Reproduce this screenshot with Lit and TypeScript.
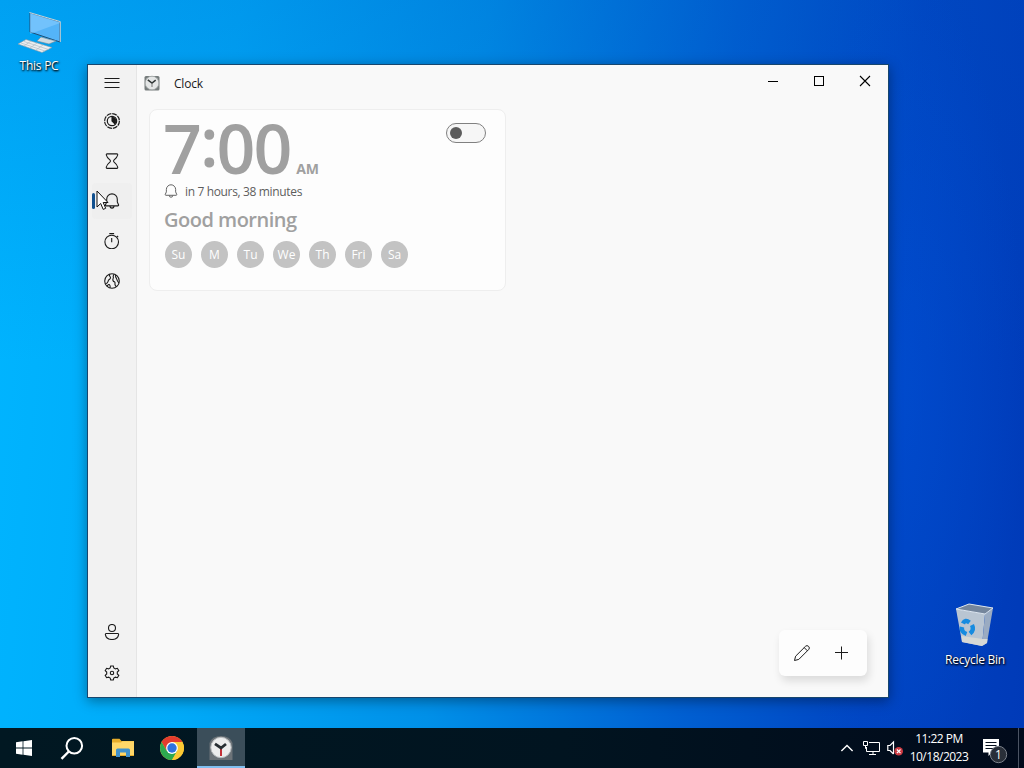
// app-root.ts

import { LitElement, html, css, svg } from 'lit';
import { customElement } from 'lit/decorators.js';

const bell = svg`
  <path d="M1.4 12 L2.7 9 V6.3 A5.3 5.4 0 0 1 13.3 6.3 V9 L14.6 12 Q14.7 12.9 13.8 12.9 H2.2 Q1.3 12.9 1.4 12 Z" />
  <path d="M6 13.1 A2 2 0 0 0 10 13.1" />
`;

// All of the rail icons are drawn in a 16x16 box.
const icons = {
  menu: svg`<path d="M0.5 3.5 H15.5 M0.5 7.5 H15.5 M0.5 12.5 H15.5" />`,
  focus: svg`
    <circle cx="8" cy="8" r="7.4" stroke-width="1.2" stroke-dasharray="4.9 0.91" />
    <circle cx="8" cy="8" r="4.7" stroke-width="1.2" />
    <path d="M8 4.2 A3.8 3.8 0 0 1 10.7 10.7 L8 8 Z" fill="currentColor" />
  `,
  timer: svg`
    <path d="M3 0.9 H13 Q13.8 0.9 13.7 2 Q13.3 4.3 9.9 7.2 Q9.2 8 9.9 8.8 Q13.3 11.7 13.7 14 Q13.8 15.4 13 15.4 H3 Q2.2 15.4 2.3 14 Q2.7 11.7 6.1 8.8 Q6.8 8 6.1 7.2 Q2.7 4.3 2.3 2 Q2.2 0.9 3 0.9 Z" />
  `,
  alarm: bell,
  stopwatch: svg`
    <circle cx="7.7" cy="9" r="6.8" />
    <path d="M5.3 0.6 H10.1 M7.7 5 V9.2 M12.9 3 L14.2 4.2" />
  `,
  world: svg`
    <circle cx="8" cy="8" r="7.3" />
    <path d="M5.8 1.1 Q4.9 2.5 6 3.5 Q7.2 4.9 5.6 6.2 Q4.2 6.9 4 8.6 Q3.4 10.3 1.4 10.8" />
    <path d="M10.2 1.2 Q8.6 3.2 9.4 4.6 Q8.3 6.9 9.4 8.4 Q11.6 8.9 10.9 11.1 Q11.2 13 12.3 13.6" />
    <path d="M3.1 13.2 Q4.2 10.9 5.6 11.8 Q6.6 12.7 5.9 14.9 M11.6 2 Q11.2 4 12.4 5.4 Q13.4 8.4 15 10.2" />
  `,
  account: svg`
    <circle cx="8" cy="4" r="3.5" />
    <path d="M2.2 9.5 H13.8 Q14.7 9.5 14.6 10.6 Q13.8 15.5 8 15.5 Q2.2 15.5 1.4 10.6 Q1.3 9.5 2.2 9.5 Z" />
  `,
  settings: svg`
    <path d="M6.7 1 H9.3 L9.8 3 L11.4 3.9 L13.4 3.3 L14.8 5.7 L13.3 7.1 V8.9 L14.8 10.3 L13.4 12.7 L11.4 12.1 L9.8 13 L9.3 15 H6.7 L6.2 13 L4.6 12.1 L2.6 12.7 L1.2 10.3 L2.7 8.9 V7.1 L1.2 5.7 L2.6 3.3 L4.6 3.9 L6.2 3 Z" />
    <circle cx="8" cy="8" r="1.7" />
  `,
};

const icon = (shape: unknown) => html`
  <svg class="icon" width="16" height="16" viewBox="0 0 16 16">${shape}</svg>
`;

@customElement('clock-nav')
export class ClockNav extends LitElement {
  static override styles = css`
    :host {
      display: flex;
      flex-direction: column;
      box-sizing: border-box;
      width: 49px;
      padding-bottom: 2px;
      background: #f2f2f2;
      border-right: 1px solid #e5e5e5;
      color: #1b1b1b;
    }
    .item {
      display: flex;
      align-items: center;
      justify-content: center;
      height: 36px;
      margin: 0 4px 4px;
      border-radius: 4px;
    }
    .item.menu {
      margin-bottom: 2px;
    }
    .item.account {
      margin-bottom: 5px;
    }
    .item.active {
      position: relative;
      background: #efefef;
    }
    .item.active::before {
      content: '';
      position: absolute;
      left: 0;
      top: 10px;
      width: 3px;
      height: 16px;
      border-radius: 2px;
      background: #10508f;
    }
    .spacer {
      flex: 1;
    }
    .icon {
      fill: none;
      stroke: currentColor;
      stroke-width: 1.1;
    }
  `;

  override render() {
    return html`
      <div class="item menu">${icon(icons.menu)}</div>
      <div class="item">${icon(icons.focus)}</div>
      <div class="item">${icon(icons.timer)}</div>
      <div class="item active">${icon(icons.alarm)}</div>
      <div class="item">${icon(icons.stopwatch)}</div>
      <div class="item">${icon(icons.world)}</div>
      <div class="spacer"></div>
      <div class="item account">${icon(icons.account)}</div>
      <div class="item">${icon(icons.settings)}</div>
    `;
  }
}

@customElement('alarm-card')
export class AlarmCard extends LitElement {
  static override styles = css`
    :host {
      display: flex;
      box-sizing: border-box;
      width: 357px;
      height: 182px;
      padding: 13px 19px 0 14px;
      justify-content: space-between;
      align-items: flex-start;
      background: #fdfdfd;
      border: 1px solid #eeeeee;
      border-radius: 8px;
      color: #a0a0a0;
    }
    .time {
      display: flex;
      align-items: baseline;
      height: 49px;
      line-height: 49px;
      font-weight: 600;
    }
    .digits {
      font-size: 68px;
      letter-spacing: -2px;
      margin-left: -1px;
    }
    .colon {
      vertical-align: 7px;
      line-height: 0;
    }
    .period {
      margin-left: 6px;
      font-size: 14px;
      font-weight: 700;
      letter-spacing: -0.2px;
    }
    .remaining {
      display: flex;
      align-items: center;
      gap: 7px;
      height: 18px;
      margin-top: 11px;
      font-size: 12px;
      line-height: 16px;
      letter-spacing: -0.35px;
      color: #5d5d5d;
    }
    .icon {
      width: 14px;
      height: 14px;
      margin-top: -2px;
      fill: none;
      stroke: currentColor;
      stroke-width: 1.1;
    }
    .name {
      height: 28px;
      margin-top: 5px;
      line-height: 28px;
      font-size: 20px;
      font-weight: 600;
      letter-spacing: -0.5px;
      white-space: nowrap;
    }
    .days {
      display: flex;
      gap: 9px;
      margin: 7px 0 0 1px;
    }
    .day {
      width: 27px;
      height: 27px;
      border-radius: 50%;
      background: #c3c3c3;
      color: #fff;
      font-size: 12px;
      line-height: 28px;
      text-align: center;
    }
    .toggle {
      box-sizing: border-box;
      width: 40px;
      height: 20px;
      padding: 3px;
      border: 1px solid #808080;
      border-radius: 10px;
      background: #f6f6f6;
    }
    .knob {
      width: 12px;
      height: 12px;
      border-radius: 50%;
      background: #5c5c5c;
    }
  `;

  days = ['Su', 'M', 'Tu', 'We', 'Th', 'Fri', 'Sa'];

  override render() {
    return html`
      <div>
        <div class="time">
          <span class="digits">7<span class="colon">:</span>00</span>
          <span class="period">AM</span>
        </div>
        <div class="remaining">${icon(bell)}<span>in 7 hours, 38 minutes</span></div>
        <div class="name">Good morning</div>
        <div class="days">
          ${this.days.map((day) => html`<div class="day">${day}</div>`)}
        </div>
      </div>
      <div class="toggle"><div class="knob"></div></div>
    `;
  }
}

@customElement('clock-window')
export class ClockWindow extends LitElement {
  static override styles = css`
    :host {
      display: flex;
      background: #f9f9f9;
      border: 1px solid #17466e;
      box-shadow: 0 3px 12px rgba(0, 0, 0, 0.38);
    }
    .content {
      flex: 1;
      display: flex;
      flex-direction: column;
    }
    .titlebar {
      display: flex;
      height: 44px;
      align-items: flex-start;
    }
    .logo {
      margin: 10px 0 0 7px;
    }
    .title {
      flex: 1;
      margin: 10px 0 0 14px;
      font-size: 12px;
      line-height: 18px;
      letter-spacing: -0.2px;
      color: #1a1a1a;
    }
    .control {
      display: flex;
      width: 46px;
      height: 32px;
      align-items: center;
      justify-content: center;
    }
    .control svg {
      fill: none;
      stroke: #000;
    }
    alarm-card {
      margin-left: 12px;
    }
    .commands {
      display: flex;
      align-self: flex-end;
      box-sizing: border-box;
      width: 88px;
      height: 46px;
      margin: auto 21px 21px 0;
      padding: 0 3px;
      align-items: center;
      background: #fdfdfd;
      border-radius: 6px;
      box-shadow: 2px 5px 9px rgba(0, 0, 0, 0.12);
    }
    .command {
      display: flex;
      width: 40px;
      justify-content: center;
    }
    .command svg {
      fill: none;
      stroke: #1b1b1b;
    }
  `;

  override render() {
    return html`
      <clock-nav></clock-nav>
      <div class="content">
        <div class="titlebar">
          <svg class="logo" width="16" height="16" viewBox="0 0 16 16">
            <rect x="0.5" y="1" width="15" height="14.5" rx="1.5" fill="#767c7c" />
            <circle cx="8" cy="8" r="6.8" fill="#e4e6e6" stroke="#a4aaaa" stroke-width="0.8" />
            <path d="M3.8 4.8 L8 8 L11.7 5.1" fill="none" stroke="#303636" stroke-width="1.5" />
            <path d="M8 8 V12" stroke="#777" />
          </svg>
          <div class="title">Clock</div>
          <div class="control">
            <svg width="12" height="12" viewBox="0 0 12 12"><path d="M1 6.5 H11" /></svg>
          </div>
          <div class="control">
            <svg width="12" height="12" viewBox="0 0 12 12"><rect x="1.5" y="1.5" width="9" height="9" /></svg>
          </div>
          <div class="control">
            <svg width="12" height="12" viewBox="0 0 12 12"><path d="M1 1 L11 11 M11 1 L1 11" stroke-width="1.1" /></svg>
          </div>
        </div>
        <alarm-card></alarm-card>
        <div class="commands">
          <div class="command">
            <svg width="18" height="18" viewBox="0 0 18 18">
              <path d="M1.5 16.5 L2.6 12.2 L12.5 2.3 Q14 0.8 15.6 2.4 Q17.2 4 15.7 5.5 L5.8 15.4 Z M11.2 3.6 L14.4 6.8" />
            </svg>
          </div>
          <div class="command">
            <svg width="14" height="14" viewBox="0 0 14 14">
              <path d="M6.5 0.5 V13.5 M0 6.5 H13" />
            </svg>
          </div>
        </div>
      </div>
    `;
  }
}

@customElement('task-bar')
export class TaskBar extends LitElement {
  static override styles = css`
    :host {
      display: flex;
      height: 40px;
      background: linear-gradient(90deg, #011822, #011420 55%, #010a1b);
      color: #fff;
    }
    .button {
      display: flex;
      box-sizing: border-box;
      align-items: center;
      justify-content: center;
      width: 48px;
    }
    .button.explorer {
      width: 52px;
      padding-left: 1px;
    }
    .button.active {
      background: #3b4e5a;
      border-bottom: 2px solid #80bff0;
      padding-top: 2px;
      margin-left: 1px;
    }
    .tray {
      display: flex;
      align-items: center;
      margin-left: auto;
    }
    .tray svg {
      fill: none;
      stroke: #fff;
    }
    .network {
      margin-left: 9px;
    }
    .volume {
      margin-left: 7px;
    }
    .datetime {
      width: 66px;
      margin-left: 1px;
      font-size: 12px;
      line-height: 18px;
      letter-spacing: -0.5px;
      text-align: center;
      white-space: nowrap;
    }
    .notifications {
      margin: 6px 10px 0 11px;
    }
    .count {
      fill: #fff;
      stroke: none;
      font-size: 12px;
    }
    .peek {
      width: 5px;
      align-self: stretch;
      border-left: 1px solid #4b5363;
    }
  `;

  override render() {
    return html`
      <div class="button">
        <svg width="16" height="16" viewBox="0 0 16 16" fill="#fff">
          <path d="M0 2.2 L6.6 1.3 V7.5 H0 Z M7.4 1.2 L16 0 V7.5 H7.4 Z M0 8.4 H6.6 V14.7 L0 13.8 Z M7.4 8.4 H16 V16 L7.4 14.8 Z" />
        </svg>
      </div>
      <div class="button">
        <svg width="24" height="24" viewBox="0 0 24 24" fill="none" stroke="#fff" stroke-width="2">
          <circle cx="14.3" cy="9.8" r="7.8" />
          <path d="M8.8 15.5 L1.5 22.8" stroke-width="2.4" />
        </svg>
      </div>
      <div class="button explorer">
        <svg width="22" height="20" viewBox="0 0 22 20">
          <path d="M0 1.5 Q0 0.8 1 0.8 H7.5 L9.5 3 H22 V18 H0 Z" fill="#e6ac2b" />
          <path d="M0 4.5 H9 L10.5 3.2 H22 V17 H0 Z" fill="#ffd768" />
          <path d="M4 19 V12 Q4 10.5 5.5 10.5 H16.5 Q18 10.5 18 12 V19 H14 V14.5 H8 V19 Z" fill="#3f91cd" />
        </svg>
      </div>
      <div class="button">
        <svg width="24" height="24" viewBox="0 0 24 24">
          <circle cx="12" cy="12" r="12" fill="#fcc934" />
          <path d="M1.61 6 A12 12 0 0 1 22.39 6 H12 L6.8 15 Z" fill="#e33b2e" />
          <path d="M1.61 6 A12 12 0 0 0 12 24 L17.2 15 H6.8 Z" fill="#2da94f" />
          <path d="M12 24 A12 12 0 0 0 22.39 6 H12 L17.2 15 Z" fill="#fcc934" />
          <circle cx="12" cy="12" r="5.9" fill="#fff" />
          <circle cx="12" cy="12" r="4.7" fill="#2f72df" />
        </svg>
      </div>
      <div class="button active">
        <svg width="24" height="24" viewBox="0 0 24 24">
          <path d="M0.5 7 Q3 0 12 0 Q21 0 23.5 7 V24 H0.5 Z" fill="#6c7378" />
          <circle cx="12" cy="11.5" r="10.2" fill="#eceded" stroke="#b8bcbe" />
          <path d="M12 12 V20" stroke="#c43138" stroke-width="2" />
          <path d="M6 7.8 L12 12 L17 8" fill="none" stroke="#272e32" stroke-width="2.8" />
        </svg>
      </div>
      <div class="tray">
        <svg width="14" height="12" viewBox="0 0 14 12">
          <path d="M1.4 9 L7 3.4 L12.6 9" stroke-width="1.4" />
        </svg>
        <svg class="network" width="17" height="16" viewBox="0 0 17 16">
          <path d="M6 2.5 H16.5 V11.5 H3.5 V7 M10 11.5 V14.5 M6 14.5 H13 M0.5 1.5 H4.5 V5.5 H0.5 Z M2.5 5.5 V8.5 H3.5" />
        </svg>
        <svg class="volume" width="18" height="18" viewBox="0 0 18 18">
          <path d="M6.5 15 V3 L3 6.5 H0.8 V11.5 H3 L6.5 15" stroke-width="1.2" />
          <circle cx="11.7" cy="12.3" r="4.3" fill="#cc3a42" stroke="none" />
          <path d="M9.9 10.5 L13.5 14.1 M13.5 10.5 L9.9 14.1" stroke-width="1.2" />
        </svg>
        <div class="datetime">
          <div>11:22 PM</div>
          <div>10/18/2023</div>
        </div>
        <svg class="notifications" width="25" height="26" viewBox="0 0 25 26">
          <path d="M0 1 H16 V14.5 H9 L5.5 18 V14.5 H0 Z" fill="#fff" stroke="none" />
          <path d="M2.5 4.5 H13.5 M2.5 7.5 H13.5 M2.5 10.5 H11" stroke="#07111f" />
          <circle cx="15.5" cy="16.5" r="8.2" fill="#292f39" stroke="#7b818b" />
          <text class="count" x="12.1" y="21">1</text>
        </svg>
        <div class="peek"></div>
      </div>
    `;
  }
}

@customElement('app-root')
export class AppRoot extends LitElement {
  static override styles = css`
    :host {
      display: flex;
      flex-direction: column;
      width: 1024px;
      height: 768px;
      overflow: hidden;
      font-family: 'Open Sans', 'Noto Sans', sans-serif;
    }
    .desktop {
      position: relative;
      flex: 1;
      background: radial-gradient(ellipse 130px 420px at 895px 380px, rgba(0, 84, 222, 0.4), transparent),
        linear-gradient(180deg, rgba(0, 80, 190, 0.2), transparent 50%),
        linear-gradient(95deg, #00b5ff 0%, #00aaf8 22%, #0090e8 45%, #0060d2 68%, #0045c2 85%, #003ab8 100%);
    }
    /* windows and shortcuts sit freely on the desktop */
    clock-window {
      position: absolute;
      left: 87px;
      top: 64px;
      width: 800px;
      height: 632px;
    }
    .shortcut {
      position: absolute;
      display: flex;
      flex-direction: column;
      align-items: center;
      width: 76px;
      color: #fff;
      font-size: 12px;
      line-height: 16px;
      letter-spacing: -0.25px;
      white-space: nowrap;
      text-shadow: 1px 1px 2px #000, 0 1px 2px rgba(0, 0, 0, 0.8);
    }
    .pc {
      left: 1px;
      top: 10px;
    }
    .bin {
      left: 937px;
      top: 602px;
    }
    .cursor {
      position: absolute;
      left: 96px;
      top: 190px;
    }
  `;

  override render() {
    return html`
      <div class="desktop">
        <div class="shortcut pc">
          <svg width="48" height="48" viewBox="0 0 48 48">
            <path d="M15 3 L45 12 V32 L15 22 Z" fill="#54b4f8" stroke="#204f78" />
            <path d="M15 3 L45 12 V13 L15 24 Z" fill="#8bceff" opacity="0.55" />
            <path d="M14.5 2.5 L45.3 11.6 V32" fill="none" stroke="#c6d7df" />
            <path d="M26 27 L33 29 L41 31 L34 34 L22 31 Z" fill="#d2dce2" stroke="#73899b" stroke-width="0.6" />
            <path d="M11 29.5 L37 37.5 L27 42.5 L3 34 Z" fill="#eceef0" stroke="#8599a8" stroke-width="0.6" />
            <path d="M9 31.5 L33.5 39.5 M6 33 L30 41 M16 31 L9 36 M22 33 L15 38 M28 35 L21 40" stroke="#b2bdc6" stroke-width="0.7" />
          </svg>
          <div>This PC</div>
        </div>
        <div class="shortcut bin">
          <svg width="48" height="50" viewBox="0 0 48 50">
            <path d="M5 7 L34 12 L31 44 L11 40 Z" fill="#b9c5d2" />
            <path d="M34 12 L42 6 L36 41 L31 44 Z" fill="#9aabc2" />
            <path d="M5 7 L18 2 L42 6 L34 12 Z" fill="#75869c" stroke="#dfe7ee" />
            <path d="M10.5 34 L32 37 L36.5 37 L36 41 L31 44 L11 40 Z" fill="#d6d8d5" />
            <g fill="none" stroke="#168be0" stroke-width="4.4">
              <path d="M12 21.5 Q14 17 18.5 20.5" />
              <path d="M21 23 Q23.5 28 19 31.5" />
              <path d="M15.5 32 Q10 30 11 25" />
            </g>
          </svg>
          <div>Recycle Bin</div>
        </div>
        <clock-window></clock-window>
        <svg class="cursor" width="13" height="21" viewBox="0 0 13 21">
          <path d="M1 1 V17 L4.7 13.5 L7.2 19.4 L9.7 18.3 L7.2 12.5 H12 Z" fill="#fff" stroke="#111" />
        </svg>
      </div>
      <task-bar></task-bar>
    `;
  }
}
